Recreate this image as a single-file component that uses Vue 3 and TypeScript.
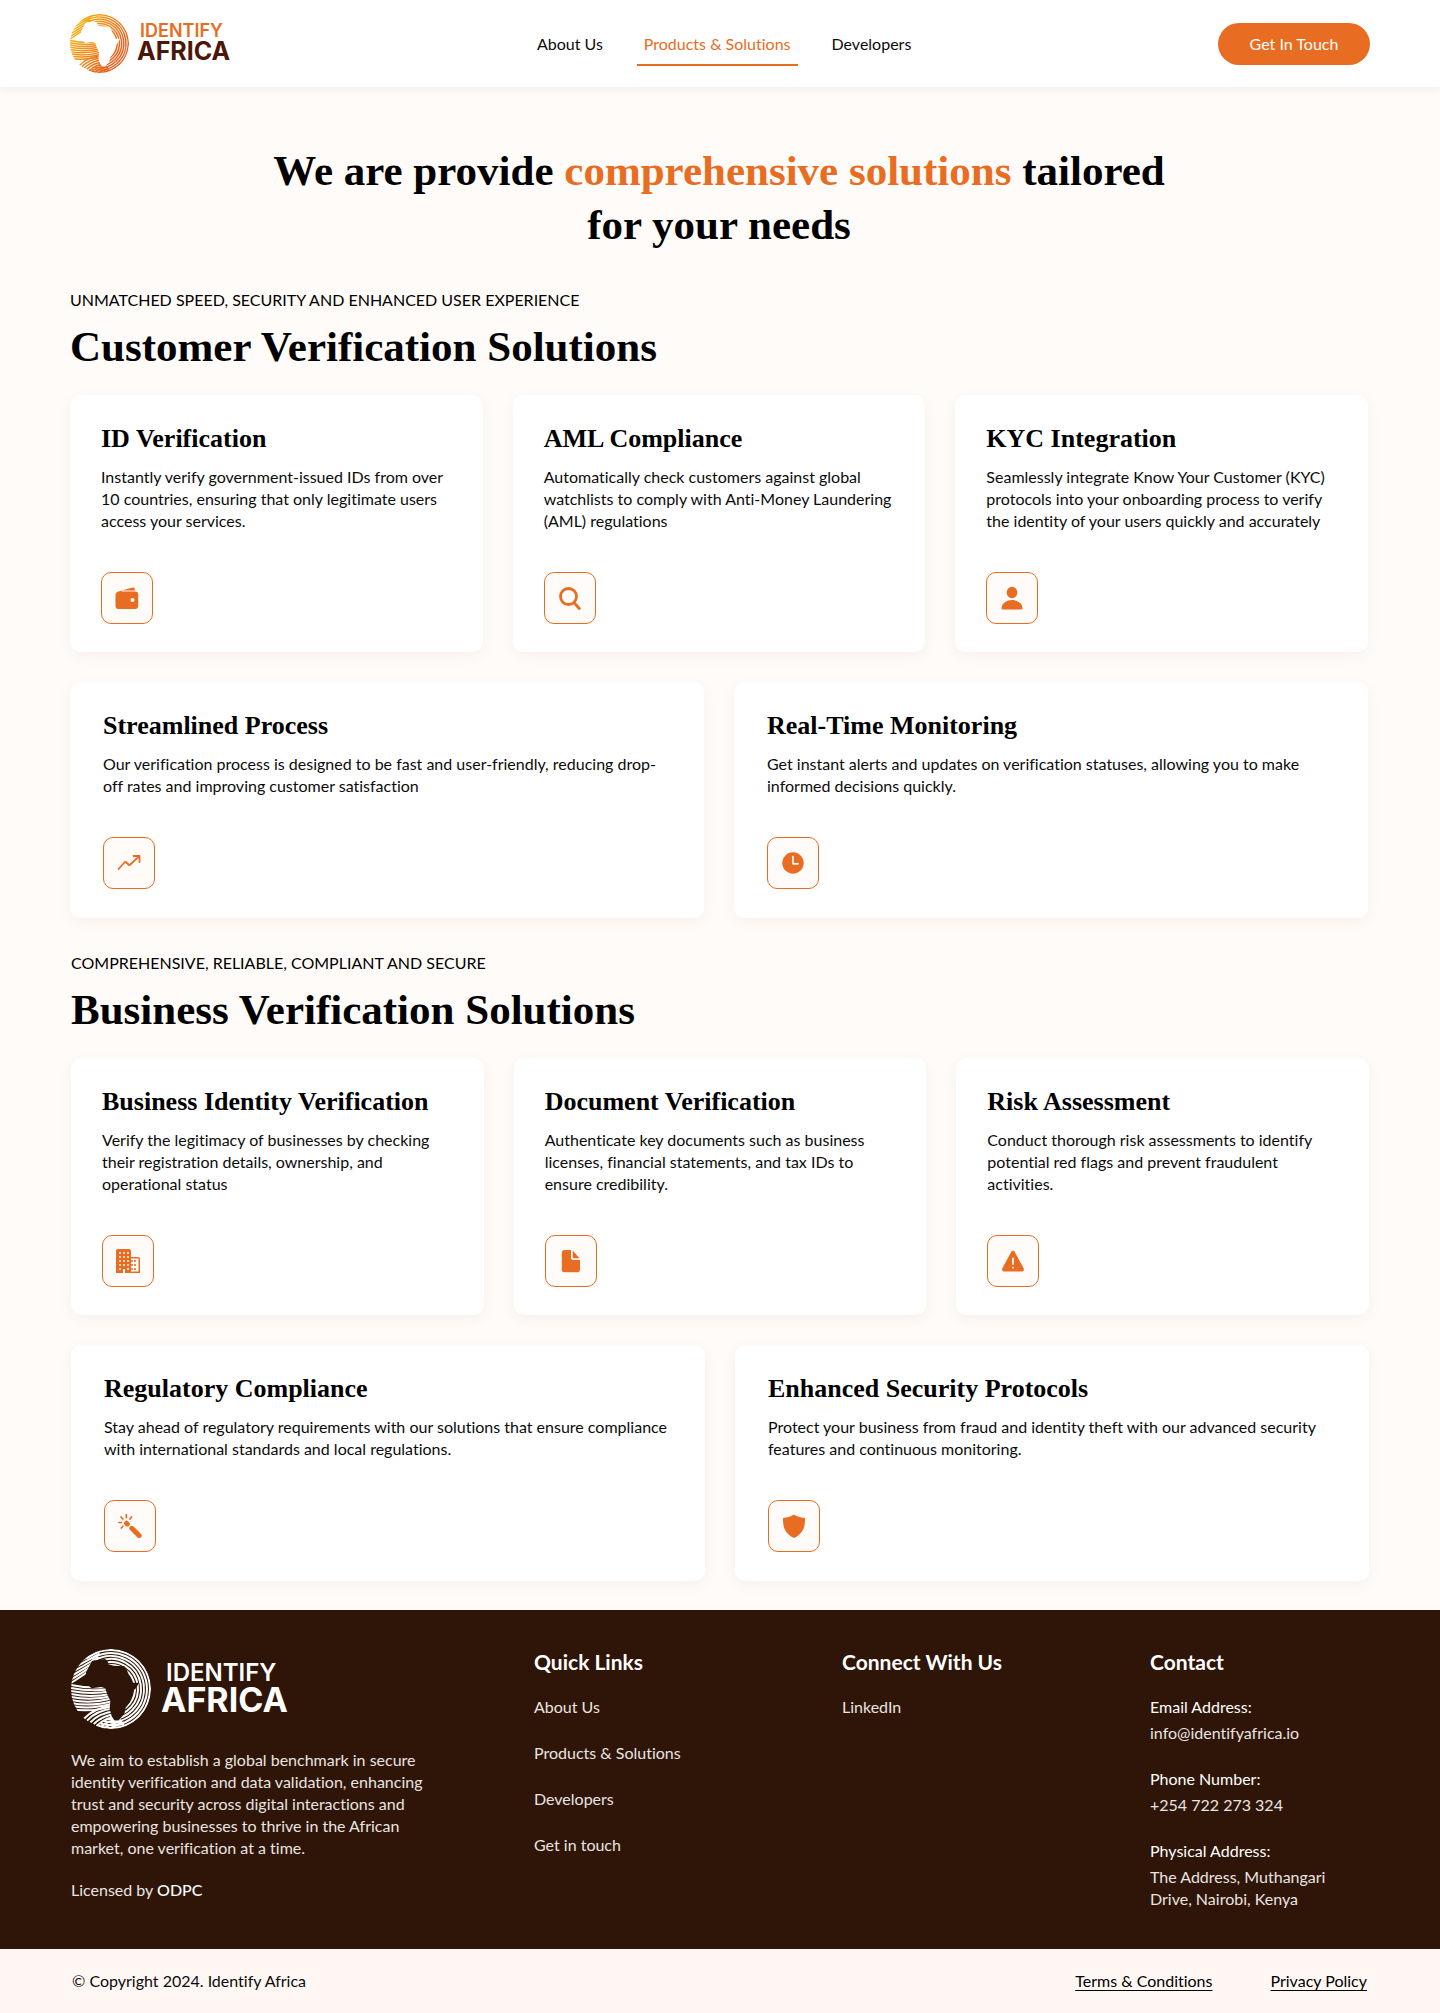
<script setup lang="ts">
type IconName =
  | 'wallet' | 'search' | 'person' | 'trend' | 'clock'
  | 'building' | 'document' | 'warning' | 'wand' | 'shield'

interface Solution {
  title: string
  text: string
  icon: IconName
}

interface Group {
  id: string
  eyebrow: string
  heading: string
  top: Solution[]
  bottom: Solution[]
}

const groups: Group[] = [
  {
    id: 'customer',
    eyebrow: 'UNMATCHED SPEED, SECURITY AND ENHANCED USER EXPERIENCE',
    heading: 'Customer Verification Solutions',
    top: [
      { title: 'ID Verification', icon: 'wallet', text: 'Instantly verify government-issued IDs from over 10 countries, ensuring that only legitimate users access your services.' },
      { title: 'AML Compliance', icon: 'search', text: 'Automatically check customers against global watchlists to comply with Anti-Money Laundering (AML) regulations' },
      { title: 'KYC Integration', icon: 'person', text: 'Seamlessly integrate Know Your Customer (KYC) protocols into your onboarding process to verify the identity of your users quickly and accurately' },
    ],
    bottom: [
      { title: 'Streamlined Process', icon: 'trend', text: 'Our verification process is designed to be fast and user-friendly, reducing drop-off rates and improving customer satisfaction' },
      { title: 'Real-Time Monitoring', icon: 'clock', text: 'Get instant alerts and updates on verification statuses, allowing you to make informed decisions quickly.' },
    ],
  },
  {
    id: 'business',
    eyebrow: 'COMPREHENSIVE, RELIABLE, COMPLIANT AND SECURE',
    heading: 'Business Verification Solutions',
    top: [
      { title: 'Business Identity Verification', icon: 'building', text: 'Verify the legitimacy of businesses by checking their registration details, ownership, and operational status' },
      { title: 'Document Verification', icon: 'document', text: 'Authenticate key documents such as business licenses, financial statements, and tax IDs to ensure credibility.' },
      { title: 'Risk Assessment', icon: 'warning', text: 'Conduct thorough risk assessments to identify potential red flags and prevent fraudulent activities.' },
    ],
    bottom: [
      { title: 'Regulatory Compliance', icon: 'wand', text: 'Stay ahead of regulatory requirements with our solutions that ensure compliance with international standards and local regulations.' },
      { title: 'Enhanced Security Protocols', icon: 'shield', text: 'Protect your business from fraud and identity theft with our advanced security features and continuous monitoring.' },
    ],
  },
]

const icons: Record<IconName, string> = {
  wallet: `<path d="M3.600 5.400 17.500 1.600c1.100-.2 2 .4 2.200 1.300l.4 1.700H7.200c-.6 0-.6.900 0 .900h13.200c1.600 0 2.800 1.100 2.800 2.700v12c0 1.600-1.200 2.800-2.800 2.800H3.300c-1.600 0-2.800-1.200-2.800-2.800V8.800c0-1.800 1.200-3 3.100-3.400z"/><circle cx="17.500" cy="14" r="2" fill="#fffbf8"/>`,
  search: `<g fill="none" stroke="currentColor" stroke-width="2.800" stroke-linecap="round"><circle cx="10.500" cy="10.500" r="8"/><path d="m16.300 17 5 5.500"/></g>`,
  person: `<ellipse cx="12" cy="6.500" rx="5.300" ry="5.800"/><path d="M3.300 23.500C2 23.500 1.300 22.700 1.500 21.500 2.300 17 7 14 12 14S21.700 17 22.500 21.500c.2 1.200-.5 2-1.800 2z"/>`,
  trend: `<path fill="none" stroke="currentColor" stroke-width="1.800" stroke-linecap="round" stroke-linejoin="round" d="m1.500 18 6-6.500c.7-.7 1.200-.7 1.900 0l2 2c.7.700 1.200.700 1.900 0l9-8.300M16.500 5h6v6"/>`,
  clock: `<circle cx="12" cy="12" r="10.700"/><path fill="none" stroke="#fffbf8" stroke-width="1.700" stroke-linecap="round" stroke-linejoin="round" d="M12 5.500v7.300h5"/>`,
  building: `<path d="M2 0h11c1.200 0 2 .8 2 2v6h7c1.200 0 2 .8 2 2v14H9v-4H7v4H0V2C0 .8.800 0 2 0z"/><path fill="#fffbf8" d="M15 9.500h7.500v13H15z"/><path fill="#fffbf8" opacity=".75" d="M3 3h2v2H3zM7 3h2v2H7zM11 3h2v2h-2zM3 7h2v2H3zM7 7h2v2H7zM11 7h2v2h-2zM3 11h2v2H3zM7 11h2v2H7zM11 11h2v2h-2zM3 15h2v2H3zM7 15h2v2H7zM11 15h2v2h-2zM3 19h2v2H3zM11 19h2v2h-2z"/><path opacity=".8" d="M15 11h2v2h-2zM18 11h2v2h-2zM15 15h2v2h-2zM18 15h2v2h-2zM15 19h2v2h-2zM18 19h2v2h-2z"/>`,
  document: `<path d="M5.600 1H12v7.500c0 1.400 1 2.400 2.400 2.400h6.600v9.600c0 1.700-1.100 2.800-2.800 2.800H5.600c-1.700 0-2.800-1.100-2.800-2.800V3.800C2.800 2.100 3.900 1 5.600 1z"/><path d="M13.700 1.400 20.600 9.200h-5.800c-.7 0-1.100-.4-1.100-1.100z"/>`,
  warning: `<path d="M10.300 2.800c.8-1.400 2.600-1.400 3.400 0l8.900 16.500c.8 1.500-.2 3.200-1.800 3.200H3.200c-1.600 0-2.600-1.700-1.800-3.200z"/><path fill="none" stroke="#fffbf8" stroke-width="1.800" stroke-linecap="round" d="M12 9.500v5.500M12 18.600v.1"/>`,
  wand: `<g fill="none" stroke="currentColor" stroke-linecap="round"><path stroke-width="5" d="m13.800 14.300 7.300 7.200"/><path stroke-width="5" d="m8.600 9.200.7.700"/><path stroke-width="1.700" d="M8.300.8v2.800M3.100 3l1.700 2M13.600 3 12 5M.8 8.500h2.700M4.800 12.200 3.300 14"/></g>`,
  shield: `<path d="M12 .5c3.300 2.200 6.200 2.900 10 3.200.6 0 1 .5 1 1.100.3 8.200-2.300 14.900-10.300 18.900-.4.200-1 .2-1.400 0C3.300 19.700.7 13 1 4.800c0-.6.4-1.100 1-1.100 3.800-.3 6.700-1 10-3.200z"/>`,
}

const range = (n: number): number[] => Array.from({ length: n }, (_, i) => i)

// Ridges of the fingerprint globe, on a 240 × 240 canvas.
const ridges: string[] = [
  // concentric arcs sweeping over the top and down the right side
  ...range(6).map((i) => {
    const r = 117 - i * 9
    const from = ((-128 + i * 5) * Math.PI) / 180
    const to = ((112 - i * 5) * Math.PI) / 180
    const p = (a: number) => `${(120 + r * Math.cos(a)).toFixed(1)} ${(120 + r * Math.sin(a)).toFixed(1)}`
    return `M${p(from)}A${r} ${r} 0 1 1 ${p(to)}`
  }),
  // slanted ridges at the upper left
  ...range(6).map((i) => `M${-4 + i * 3} ${104 - i * 12}Q${24 + i * 4} ${88 - i * 12} ${70 + i * 4} ${54 - i * 10}`),
  // level ridges at the left
  ...range(9).map((i) => `M0 ${108 + i * 9}Q60 ${120 + i * 9} ${116 + i * 2} ${113 + i * 7}`),
  // rising ridges at the lower left
  ...range(9).map((i) => `M${38 + i * 10} ${210 + i * 5}Q${66 + i * 9} ${178 + i * 7} ${124 + i * 5} ${170 + i * 8}`),
]

const navLinks = ['About Us', 'Products & Solutions', 'Developers']
const quickLinks = ['About Us', 'Products & Solutions', 'Developers', 'Get in touch']
</script>

<template>
  <div class="page">
    <svg class="defs" width="0" height="0" aria-hidden="true">
      <defs>
        <linearGradient id="sunrise" gradientUnits="userSpaceOnUse" x1="20" y1="60" x2="190" y2="170">
          <stop offset="0" stop-color="#fbae10" />
          <stop offset="1" stop-color="#e6601f" />
        </linearGradient>
        <mask id="globe-mask" maskUnits="userSpaceOnUse" x="0" y="0" width="240" height="240">
          <circle cx="120" cy="120" r="120" fill="#fff" />
          <path
            fill="#000"
            d="M63 36 78 33 102 30 110 36 112 46 128 50 160 52 168 64 178 90 184 101 204 101 196 116 180 132 174 144 178 158 164 176 160 194 144 213 130 214 122 202 116 180 118 156 108 134 103 118 90 114 62 118 50 108 43 96 45 70z"
          />
        </mask>
        <symbol id="globe" viewBox="0 0 240 240">
          <g mask="url(#globe-mask)" fill="none" stroke-width="6">
            <path v-for="d in ridges" :key="d" :d="d" />
          </g>
        </symbol>
      </defs>
    </svg>

    <header class="header">
      <a class="logo" href="#">
        <svg class="globe" aria-hidden="true"><use href="#globe" stroke="url(#sunrise)" /></svg>
        <span class="wordmark">
          <span class="word-top">IDENTIFY</span>
          <span class="word-bottom">AFRICA</span>
        </span>
      </a>
      <nav class="nav">
        <a v-for="(link, i) in navLinks" :key="link" href="#" :class="{ active: i === 1 }">{{ link }}</a>
      </nav>
      <button class="cta" type="button">Get In Touch</button>
    </header>

    <main class="main">
      <h1>We are provide <em>comprehensive solutions</em> tailored for your needs</h1>

      <section v-for="group in groups" :key="group.id" :class="group.id">
        <p class="eyebrow">{{ group.eyebrow }}</p>
        <h2>{{ group.heading }}</h2>
        <div v-for="(row, r) in [group.top, group.bottom]" :key="r" class="row" :class="{ wide: r === 1 }">
          <article v-for="item in row" :key="item.title" class="card">
            <h3>{{ item.title }}</h3>
            <p>{{ item.text }}</p>
            <span class="tile">
              <svg viewBox="0 0 24 24" fill="currentColor" aria-hidden="true" v-html="icons[item.icon]" />
            </span>
          </article>
        </div>
      </section>
    </main>

    <footer>
      <div class="footer">
        <div class="about">
          <a class="logo light" href="#">
            <svg class="globe" aria-hidden="true"><use href="#globe" stroke="#fff" /></svg>
            <span class="wordmark">
              <span class="word-top">IDENTIFY</span>
              <span class="word-bottom">AFRICA</span>
            </span>
          </a>
          <p>We aim to establish a global benchmark in secure identity verification and data validation, enhancing trust and security across digital interactions and empowering businesses to thrive in the African market, one verification at a time.</p>
          <p>Licensed by <strong>ODPC</strong></p>
        </div>
        <div>
          <h4>Quick Links</h4>
          <ul>
            <li v-for="link in quickLinks" :key="link"><a href="#">{{ link }}</a></li>
          </ul>
        </div>
        <div>
          <h4>Connect With Us</h4>
          <ul>
            <li><a href="#">LinkedIn</a></li>
          </ul>
        </div>
        <div>
          <h4>Contact</h4>
          <dl>
            <div><dt>Email Address:</dt><dd><a href="mailto:info@identifyafrica.io">info@identifyafrica.io</a></dd></div>
            <div><dt>Phone Number:</dt><dd>+254 722 273 324</dd></div>
            <div><dt>Physical Address:</dt><dd>The Address, Muthangari Drive, Nairobi, Kenya</dd></div>
          </dl>
        </div>
      </div>
      <div class="legal">
        <span>© Copyright 2024. Identify Africa</span>
        <div class="legal-links">
          <a href="#">Terms &amp; Conditions</a>
          <a href="#">Privacy Policy</a>
        </div>
      </div>
    </footer>
  </div>
</template>

<style>
body {
  background: #fffbf8;
}
</style>

<style scoped>
.page {
  color: #0b0b0b;
  font: 16px/22px Lato, "Open Sans", sans-serif;
  font-variant-ligatures: no-common-ligatures;
}
h1, h2, h3, h4, p, ul, dl, dd {
  margin: 0;
  padding: 0;
}
ul {
  list-style: none;
}
a {
  color: inherit;
  text-decoration: none;
}
.defs {
  position: absolute;
}

.header {
  display: flex;
  align-items: center;
  justify-content: space-between;
  height: 87px;
  padding: 0 70px;
  background: #fff;
  box-shadow: 0 2px 10px rgba(60, 40, 30, 0.06);
}
.logo {
  display: flex;
  align-items: center;
  gap: 8px;
  font-family: Inter, sans-serif;
}
.globe {
  flex: none;
  width: 59px;
  height: 59px;
}
.wordmark {
  display: flex;
  flex-direction: column;
  margin-bottom: 6px;
}
.word-top {
  padding-left: 3px;
  color: #e86d22;
  font-size: 18px;
  font-weight: 600;
  line-height: 20px;
}
.word-bottom {
  color: #4a1708;
  font-size: 25px;
  font-weight: 700;
  line-height: 20px;
}
.nav {
  display: flex;
  gap: 27px;
}
.nav a {
  padding: 12px 7px 9px;
  border-bottom: 2px solid transparent;
}
.nav .active {
  color: #e86d22;
  border-color: #e86d22;
}
.cta {
  min-width: 152px;
  height: 42px;
  padding: 0 30px;
  border: 0;
  border-radius: 21px;
  background: #e86d22;
  color: #fff;
  font: inherit;
}

.main {
  padding: 57px 72px 29px 70px;
}
h1, h2, h3 {
  color: #000;
  font-family: "Liberation Serif", "Times New Roman", serif;
  font-weight: 700;
}
h1 {
  max-width: 920px;
  margin: 0 auto 37px;
  font-size: 43px;
  line-height: 54px;
  text-align: center;
}
h1 em {
  color: #e86d22;
  font-style: normal;
}
.business {
  margin: 34px -1px 0 1px;
}
.eyebrow {
  color: #000;
}
h2 {
  margin: 11px 0 23px;
  font-size: 43px;
  line-height: 50px;
}
.row {
  display: flex;
  gap: 30px;
}
.row + .row {
  margin-top: 30px;
}
.card {
  flex: 1 1 0;
  padding: 28px 31px;
  border-radius: 10px;
  background: #fff;
  box-shadow: 0 4px 14px rgba(80, 50, 30, 0.05);
}
.wide .card {
  padding: 28px 33px 29px;
}
h3 {
  font-size: 26px;
  line-height: 32px;
}
.card p {
  margin: 11px 0 40px;
}
.tile {
  display: grid;
  place-items: center;
  box-sizing: border-box;
  width: 52px;
  height: 52px;
  border: 1px solid #e86d22;
  border-radius: 10px;
  background: #fffbf8;
  color: #e86d22;
}
.tile svg {
  width: 24px;
  height: 24px;
}

.footer {
  display: grid;
  grid-template-columns: 463fr 308fr 308fr 219fr;
  padding: 39px 71px;
  background: #2e1507;
  color: #e9e4e1;
}
.about p {
  max-width: 360px;
  margin-top: 20px;
}
.about strong {
  color: #fff;
  font-weight: 500;
}
.light {
  gap: 10px;
}
.light .globe {
  width: 80px;
  height: 80px;
}
.light .word-top,
.light .word-bottom {
  color: #fff;
}
.light .word-top {
  padding-left: 5px;
  font-size: 24px;
  line-height: 27px;
}
.light .word-bottom {
  font-size: 34px;
  line-height: 28px;
}
h4 {
  margin-bottom: 21px;
  color: #fff;
  font-size: 21px;
  line-height: 26px;
}
ul, dl {
  display: flex;
  flex-direction: column;
  gap: 24px;
}
dt {
  margin-bottom: 4px;
  color: #fff;
}
dd {
  max-width: 200px;
}
.legal {
  display: flex;
  align-items: center;
  justify-content: space-between;
  height: 64px;
  padding: 0 73px 0 72px;
  background: #fff7f4;
}
.legal-links {
  display: flex;
  gap: 58px;
  color: #000;
}
.legal-links a {
  text-decoration: underline;
  text-decoration-skip-ink: none;
  text-underline-offset: 3px;
}
</style>
